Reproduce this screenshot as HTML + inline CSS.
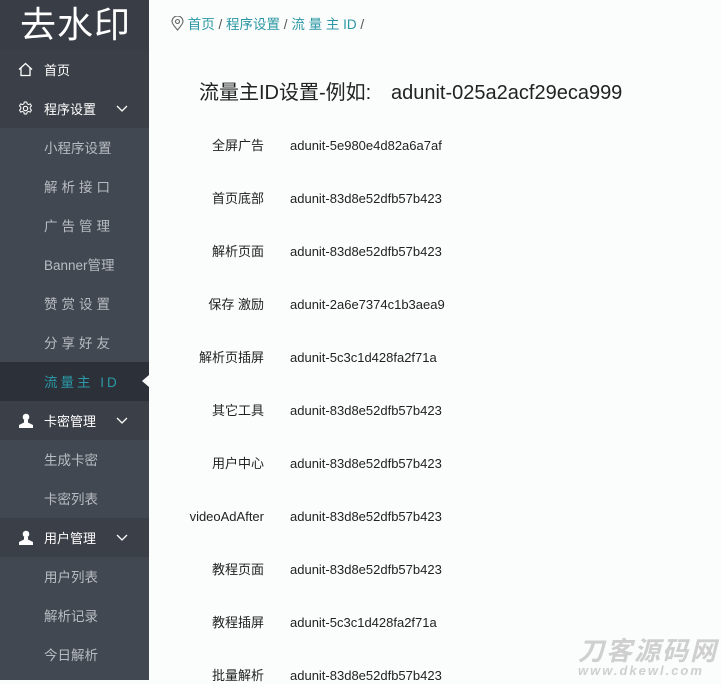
<!DOCTYPE html>
<html><head><meta charset="utf-8"><style>
*{margin:0;padding:0;box-sizing:border-box}
body{width:721px;height:680px;overflow:hidden;background:#fbfcfc;font-family:"Liberation Sans","Noto Sans CJK SC",sans-serif;position:relative}
.sb{position:absolute;left:0;top:0;width:149px;height:680px;background:#424851}
.logo{height:50px;background:#393e46;color:#fff;font-size:36px;line-height:50px;padding-left:20px;letter-spacing:1px}
.it{position:absolute;left:0;width:149px;height:39px;line-height:41px;font-size:13px}
.m{background:#3b4048;color:#fff;padding-left:44px}
.s{color:#b8bcc2;padding-left:44px;font-size:13.5px}
.act{background:#2b3039;color:#2a9aa8}
.act:after{content:"";position:absolute;right:0;top:13px;border:6px solid transparent;border-right:7px solid #fbfcfc}
.ic{position:absolute;left:18px;top:12px}
.ch{position:absolute;left:116px;top:16px}
.bc{position:absolute;left:171px;top:16px;font-size:13.5px;color:#2a97a3;line-height:18px}
.bc span{color:#555}
.t{position:absolute;left:199px;top:81px;font-size:20px;color:#222;line-height:24px}
.r{position:absolute;font-size:13px;color:#222;line-height:16px;height:16px}
.l{width:104px;left:160px;text-align:right}
.v{left:290px}
</style></head><body>
<div class="sb">
<div class="logo">去水印</div>
<div class="it m" style="top:50px"><svg class="ic" width="15" height="15" viewBox="0 0 15 15"><path d="M1 7.5L7.5 1.5 14 7.5M3 6v7.5h9V6" fill="none" stroke="#fff" stroke-width="1.3"/></svg>首页</div>
<div class="it m" style="top:89px"><svg class="ic" width="15" height="15" viewBox="0 0 15 15"><circle cx="7.5" cy="7.5" r="2.2" fill="none" stroke="#fff" stroke-width="1.1"/><path d="M6.3 1h2.4l.4 1.8 1.5.8 1.7-.7 1.2 2-1.3 1.3v1.6l1.3 1.3-1.2 2-1.7-.7-1.5.8-.4 1.8H6.3l-.4-1.8-1.5-.8-1.7.7-1.2-2 1.3-1.3V6.2L1.5 4.9l1.2-2 1.7.7 1.5-.8z" fill="none" stroke="#fff" stroke-width="1"/></svg>程序设置<svg class="ch" width="12" height="7" viewBox="0 0 12 7"><path d="M1 1l5 5 5-5" fill="none" stroke="#fff" stroke-width="1.3"/></svg></div>
<div class="it s" style="top:128px">小程序设置</div>
<div class="it s" style="top:167px;letter-spacing:4px">解析接口</div>
<div class="it s" style="top:206px;letter-spacing:4px">广告管理</div>
<div class="it s" style="top:245px">Banner管理</div>
<div class="it s" style="top:284px;letter-spacing:4px">赞赏设置</div>
<div class="it s" style="top:323px;letter-spacing:4px">分享好友</div>
<div class="it s act" style="top:362px;letter-spacing:3px">流量主 ID</div>
<div class="it m" style="top:401px"><svg class="ic" width="16" height="15" viewBox="0 0 16 15"><circle cx="8" cy="4" r="3.3" fill="#fff"/><path d="M6 7h4v2.5l5 2.5V15H1v-3l5-2.5z" fill="#fff"/></svg>卡密管理<svg class="ch" width="12" height="7" viewBox="0 0 12 7"><path d="M1 1l5 5 5-5" fill="none" stroke="#fff" stroke-width="1.3"/></svg></div>
<div class="it s" style="top:440px">生成卡密</div>
<div class="it s" style="top:479px">卡密列表</div>
<div class="it m" style="top:518px"><svg class="ic" width="16" height="15" viewBox="0 0 16 15"><circle cx="8" cy="4" r="3.3" fill="#fff"/><path d="M6 7h4v2.5l5 2.5V15H1v-3l5-2.5z" fill="#fff"/></svg>用户管理<svg class="ch" width="12" height="7" viewBox="0 0 12 7"><path d="M1 1l5 5 5-5" fill="none" stroke="#fff" stroke-width="1.3"/></svg></div>
<div class="it s" style="top:557px">用户列表</div>
<div class="it s" style="top:596px">解析记录</div>
<div class="it s" style="top:635px">今日解析</div>
</div>
<div class="bc"><svg width="13" height="15" viewBox="0 0 13 15" style="vertical-align:-2px"><path d="M6.5 14C3 10 1 7.5 1 5.5a5.5 5.5 0 0 1 11 0C12 7.5 10 10 6.5 14z M6.5 3.5a2 2 0 1 0 .01 0z" fill="none" stroke="#666" stroke-width="1.1"/></svg> 首页 <span>/</span> 程序设置 <span>/</span> 流 量 主 ID <span>/</span></div>
<div class="t">流量主ID设置-例如:</div>
<div class="t" style="left:391px">adunit-025a2acf29eca999</div>
<div class="r l" style="top:138px">全屏广告</div><div class="r v" style="top:138px">adunit-5e980e4d82a6a7af</div>
<div class="r l" style="top:191px">首页底部</div><div class="r v" style="top:191px">adunit-83d8e52dfb57b423</div>
<div class="r l" style="top:244px">解析页面</div><div class="r v" style="top:244px">adunit-83d8e52dfb57b423</div>
<div class="r l" style="top:297px">保存 激励</div><div class="r v" style="top:297px">adunit-2a6e7374c1b3aea9</div>
<div class="r l" style="top:350px">解析页插屏</div><div class="r v" style="top:350px">adunit-5c3c1d428fa2f71a</div>
<div class="r l" style="top:403px">其它工具</div><div class="r v" style="top:403px">adunit-83d8e52dfb57b423</div>
<div class="r l" style="top:456px">用户中心</div><div class="r v" style="top:456px">adunit-83d8e52dfb57b423</div>
<div class="r l" style="top:509px">videoAdAfter</div><div class="r v" style="top:509px">adunit-83d8e52dfb57b423</div>
<div class="r l" style="top:562px">教程页面</div><div class="r v" style="top:562px">adunit-83d8e52dfb57b423</div>
<div class="r l" style="top:615px">教程插屏</div><div class="r v" style="top:615px">adunit-5c3c1d428fa2f71a</div>
<div class="r l" style="top:668px">批量解析</div><div class="r v" style="top:668px">adunit-83d8e52dfb57b423</div>
<div style="position:absolute;left:578px;top:636px;font-size:26px;line-height:30px;font-weight:bold;font-style:italic;color:#cfcfcf;letter-spacing:2px">刀客源码网</div>
<div style="position:absolute;left:578px;top:663px;font-size:13px;line-height:15px;font-weight:bold;font-style:italic;color:#cfcfcf;letter-spacing:2px">www.dkewl.com</div>
</body></html>
